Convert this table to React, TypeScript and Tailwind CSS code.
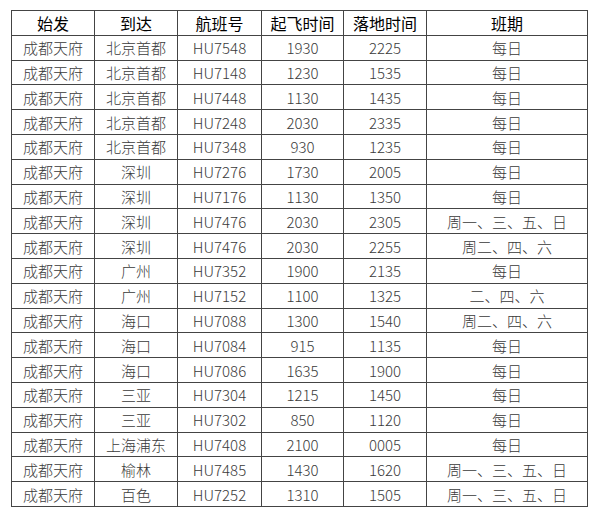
const rows: [string, string, string, string, string][] = [
  ["北京首都", "HU7548", "1930", "2225", "每日"],
  ["北京首都", "HU7148", "1230", "1535", "每日"],
  ["北京首都", "HU7448", "1130", "1435", "每日"],
  ["北京首都", "HU7248", "2030", "2335", "每日"],
  ["北京首都", "HU7348", "930", "1235", "每日"],
  ["深圳", "HU7276", "1730", "2005", "每日"],
  ["深圳", "HU7176", "1130", "1350", "每日"],
  ["深圳", "HU7476", "2030", "2305", "周一、三、五、日"],
  ["深圳", "HU7476", "2030", "2255", "周二、四、六"],
  ["广州", "HU7352", "1900", "2135", "每日"],
  ["广州", "HU7152", "1100", "1325", "二、四、六"],
  ["海口", "HU7088", "1300", "1540", "周二、四、六"],
  ["海口", "HU7084", "915", "1135", "每日"],
  ["海口", "HU7086", "1635", "1900", "每日"],
  ["三亚", "HU7304", "1215", "1450", "每日"],
  ["三亚", "HU7302", "850", "1120", "每日"],
  ["上海浦东", "HU7408", "2100", "0005", "每日"],
  ["榆林", "HU7485", "1430", "1620", "周一、三、五、日"],
  ["百色", "HU7252", "1310", "1505", "周一、三、五、日"],
];

const App = () => {
  return (
    <div className="w-[600px] h-[515px] bg-white pt-[10px] pl-[11px] font-['Noto_Sans_CJK_SC',sans-serif]">
      <table className="w-[576px] table-fixed border-collapse border border-[#222] text-[15px] leading-none">
        <colgroup>
          <col className="w-[83px]" />
          <col className="w-[83px]" />
          <col className="w-[84px]" />
          <col className="w-[82px]" />
          <col className="w-[83px]" />
          <col className="w-[161px]" />
        </colgroup>
        <thead>
          <tr className="h-[24.8px] text-black text-[16px]">
            <th className="border border-[#444] font-normal">始发</th>
            <th className="border border-[#444] font-normal">到达</th>
            <th className="border border-[#444] font-normal">航班号</th>
            <th className="border border-[#444] font-normal">起飞时间</th>
            <th className="border border-[#444] font-normal">落地时间</th>
            <th className="border border-[#444] font-normal">班期</th>
          </tr>
        </thead>
        <tbody className="text-[#3a3a3a] font-light">
          {rows.map((r, i) => (
            <tr key={i} className="h-[24.8px]">
              <td className="border border-[#444] text-center">成都天府</td>
              <td className="border border-[#444] text-center">{r[0]}</td>
              <td className="border border-[#444] text-center">{r[1]}</td>
              <td className="border border-[#444] text-center">{r[2]}</td>
              <td className="border border-[#444] text-center">{r[3]}</td>
              <td className="border border-[#444] text-center">{r[4]}</td>
            </tr>
          ))}
        </tbody>
      </table>
    </div>
  );
};

export default App;
